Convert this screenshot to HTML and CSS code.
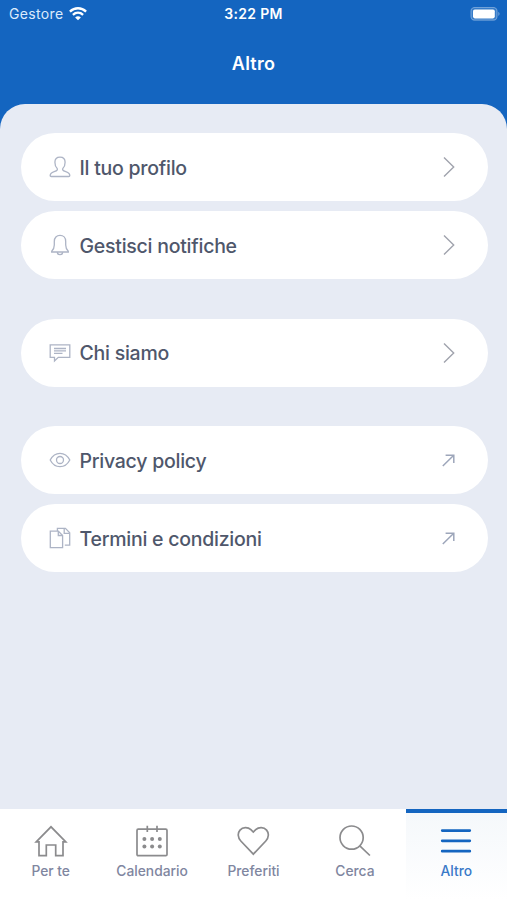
FILE: index.html
```html
<!DOCTYPE html>
<html lang="it">
<head>
    <meta charset="UTF-8">
    <meta name="viewport" content="width=device-width, initial-scale=1.0">
    <title>Altro</title>
    <link rel="stylesheet" href="styles.css">
</head>
<body>
    <header class="header">
        <div class="status">
            <div class="carrier">
                <span>Gestore</span>
                <svg width="18" height="14" viewBox="0 0 18 14" fill="none" stroke="#fff" stroke-width="2.3">
                    <path d="M0.9 4.6C5.6 0.1 12.4 0.1 17.1 4.6"/>
                    <path d="M3.9 7.8C6.9 5 11.1 5 14.1 7.8"/>
                    <path d="M9 13.3L6.1 10.4Q9 7.9 11.9 10.4Z" fill="#fff" stroke="none"/>
                </svg>
            </div>
            <span class="time">3:22 PM</span>
            <svg class="battery" width="31" height="14" viewBox="0 0 31 14">
                <rect x="1" y="0.5" width="26" height="12.6" rx="3.6" fill="#fff" fill-opacity=".15" stroke="#fff" stroke-opacity=".35" stroke-width="1.1"/>
                <rect x="3" y="2.4" width="21.8" height="9" rx="1.8" fill="#fff"/>
                <path d="M28.3 4.8Q30.8 6.9 28.3 9Z" fill="#fff" fill-opacity=".4"/>
            </svg>
        </div>
        <h1>Altro</h1>
    </header>

    <main class="content">
        <div class="group">
            <a class="row">
                <svg class="icon" viewBox="0 0 22 22">
                    <path d="M8.2 12.6C6.6 11.2 5.9 9.4 5.9 6.3C5.9 3 7.8 1.1 11 1.1S16.1 3 16.1 6.3C16.1 9.4 15.4 11.2 13.8 12.6C13.1 14 14.2 14.7 16.2 15.4C19.3 16.5 20.8 17.2 20.8 19.4C20.8 20.2 20.4 20.5 19.7 20.5H2.3C1.6 20.5 1.2 20.2 1.2 19.4C1.2 17.2 2.7 16.5 5.8 15.4C7.8 14.7 8.9 14 8.2 12.6Z"/>
                </svg>
                <span class="label">Il tuo profilo</span>
                <svg class="chevron" viewBox="0 0 12 22"><path d="M1 1.4L10.7 11L1 20.6"/></svg>
            </a>
            <a class="row">
                <svg class="icon" viewBox="0 0 22 22">
                    <path d="M2.7 17.2C4.6 15.4 5.3 13.7 5.3 11V7.4C5.3 3.8 7.6 1.4 11 1.4S16.7 3.8 16.7 7.4V11C16.7 13.7 17.4 15.4 19.3 17.2V18H2.7Z"/>
                    <path d="M8.3 18.1C8.5 19.9 9.5 20.7 11 20.7S13.5 19.9 13.7 18.1"/>
                </svg>
                <span class="label">Gestisci notifiche</span>
                <svg class="chevron" viewBox="0 0 12 22"><path d="M1 1.4L10.7 11L1 20.6"/></svg>
            </a>
        </div>

        <div class="group">
            <a class="row">
                <svg class="icon" viewBox="0 0 22 22">
                    <path d="M1.2 2.8H20.8V15.3H9.3L5.5 18.9V15.3H1.2Z"/>
                    <path d="M5 6.5H17M5 8.9H17M5 11.3H13.5"/>
                </svg>
                <span class="label">Chi siamo</span>
                <svg class="chevron" viewBox="0 0 12 22"><path d="M1 1.4L10.7 11L1 20.6"/></svg>
            </a>
        </div>

        <div class="group">
            <a class="row">
                <svg class="icon" viewBox="0 0 22 22">
                    <path d="M1.2 11C3.5 6.6 7 4.3 11 4.3S18.5 6.6 20.8 11C18.5 15.4 15 17.7 11 17.7S3.5 15.4 1.2 11Z"/>
                    <circle cx="11" cy="11" r="3.5"/>
                </svg>
                <span class="label">Privacy policy</span>
                <svg class="arrow" viewBox="0 0 13 13"><path d="M0.8 12L11.5 1.5M3.6 1.2H11.8V9"/></svg>
            </a>
            <a class="row">
                <svg class="icon" viewBox="0 0 22 22">
                    <path d="M1.3 4.1H9.3L13.6 8.5V20.7H1.3Z"/>
                    <path d="M9.3 4.1V8.5H13.6"/>
                    <path d="M8.4 4V1.3H16.4L20.7 5.7V18.1H15.8"/>
                    <path d="M15.2 1.5V6.4H20.5"/>
                </svg>
                <span class="label">Termini e condizioni</span>
                <svg class="arrow" viewBox="0 0 13 13"><path d="M0.8 12L11.5 1.5M3.6 1.2H11.8V9"/></svg>
            </a>
        </div>
    </main>

    <nav class="tabs">
        <a class="tab">
            <svg viewBox="0 0 34 34"><path d="M2.2 17.8L17 2.8L31.8 17.8H29V31.7H21.7V21H12.3V31.7H5V17.8Z"/></svg>
            <span>Per te</span>
        </a>
        <a class="tab">
            <svg viewBox="0 0 34 34">
                <rect x="2" y="5.2" width="30" height="26.5" rx="1.2"/>
                <path d="M12.3 1.8V8M22 1.8V8"/>
                <g class="dots">
                    <circle cx="9.4" cy="14.9" r="2"/><circle cx="17.1" cy="14.9" r="2"/><circle cx="24.8" cy="14.9" r="2"/>
                    <circle cx="9.4" cy="22.5" r="2"/><circle cx="17.1" cy="22.5" r="2"/><circle cx="24.8" cy="22.5" r="2"/>
                </g>
            </svg>
            <span>Calendario</span>
        </a>
        <a class="tab">
            <svg viewBox="0 0 34 34"><path d="M17.3 30.2L4.8 17C1.6 13.5 1.5 9 4 6.1C6.8 2.8 11.8 2.7 14.9 5.7L17.3 8.1L19.7 5.7C22.8 2.7 27.8 2.8 30.6 6.1C33.1 9 33 13.5 29.8 17Z"/></svg>
            <span>Preferiti</span>
        </a>
        <a class="tab">
            <svg viewBox="0 0 34 34"><circle cx="13.6" cy="13.6" r="11.6"/><path d="M21.8 21.8L31.9 31.5"/></svg>
            <span>Cerca</span>
        </a>
        <a class="tab active">
            <svg viewBox="0 0 34 34"><path d="M3.2 6.6H30.8M3.2 16.8H30.8M3.2 27.2H30.8"/></svg>
            <span>Altro</span>
        </a>
    </nav>
</body>
</html>
```
FILE: styles.css
```css
* {
    box-sizing: border-box;
}
body {
    display: flex;
    flex-direction: column;
    height: 900px;
    margin: 0;
    background-color: #1465c0;
    font-family: Inter, "Liberation Sans", sans-serif;
    overflow: hidden;
}
.header {
    height: 103.5px;
    color: #fff;
}
.status {
    display: grid;
    grid-template-columns: 1fr auto 1fr;
    align-items: center;
    height: 27px;
    padding: 0 6px 0 9px;
    font-size: 14px;
}
.carrier {
    display: flex;
    align-items: center;
    gap: 5px;
    color: #dcebfc;
    letter-spacing: 0.35px;
}
.time {
    margin-right: 3px;
    font-weight: 600;
    letter-spacing: 0.35px;
}
.battery {
    justify-self: end;
}
h1 {
    margin: 23px 0 0;
    font-size: 18px;
    line-height: 27px;
    font-weight: 600;
    letter-spacing: 0.25px;
    text-align: center;
}
.content {
    display: flex;
    flex: 1;
    flex-direction: column;
    gap: 39.5px;
    padding: 29.5px 19.5px 0 20.5px;
    background-color: #e7ebf4;
    border-radius: 25px 25px 0 0;
}
.group {
    display: flex;
    flex-direction: column;
    gap: 10px;
}
.row {
    display: flex;
    align-items: center;
    height: 68px;
    padding: 0 33px 0 28px;
    background-color: #fff;
    border-radius: 34px;
}
.icon {
    width: 22px;
    height: 22px;
    margin-right: 9px;
    fill: none;
    stroke: #adb4c5;
    stroke-width: 1.3;
}
.label {
    flex: 1;
    padding-top: 1px;
    color: #4f576b;
    font-size: 19.5px;
    font-weight: 500;
    letter-spacing: -0.25px;
    white-space: nowrap;
}
.chevron {
    width: 12px;
    height: 22px;
    fill: none;
    stroke: #a0a3ad;
    stroke-width: 1.4;
}
.arrow {
    width: 13px;
    height: 13px;
    fill: none;
    stroke: #9da6ba;
    stroke-width: 1.5;
}
.tabs {
    display: grid;
    grid-template-columns: repeat(5, 1fr);
    height: 91px;
    background-color: #fff;
}
.tab {
    display: flex;
    flex-direction: column;
    align-items: center;
    gap: 4px;
    padding-top: 15px;
    color: #80869f;
    font-size: 13.8px;
    line-height: 18px;
    font-weight: 450;
}
.tab svg {
    width: 34px;
    height: 34px;
    fill: none;
    stroke: #8b8b8d;
    stroke-width: 1.7;
}
.tab .dots {
    fill: #8b8b8d;
    stroke: none;
}
.tab.active {
    padding-top: 11px;
    border-top: 4px solid #1465c0;
    background: linear-gradient(#f5f8fb, #fff);
    color: #3979c8;
}
.tab.active svg {
    stroke: #1465c0;
    stroke-width: 2.7;
    stroke-linecap: round;
}
```
